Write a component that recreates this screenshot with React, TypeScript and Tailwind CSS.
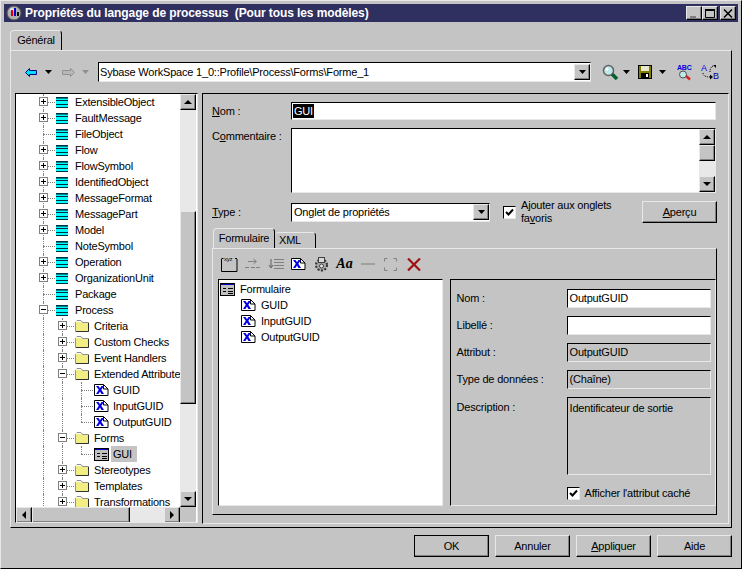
import React from "react";

const raised = "bg-[#c4c4c4] border border-t-[#e8e8e8] border-l-[#e8e8e8] border-r-black border-b-black shadow-[inset_-1px_-1px_0_#808080]";
const sunken = "border border-t-black border-l-black border-r-[#e8e8e8] border-b-[#e8e8e8]";

const Caret = ({ color = "#000" }: { color?: string }) => (
  <svg width="7" height="4" viewBox="0 0 7 4" className="block">
    <path d="M0 0h7L3.5 4z" fill={color} />
  </svg>
);

const TableIcon = () => (
  <svg width="12" height="11" viewBox="0 0 12 11" className="block shrink-0">
    <rect width="12" height="11" fill="#00ffff" />
    <path d="M0 .5h12M0 3.500h12M0 7.500h12M0 10.500h12" stroke="#003040" fill="none" />
    <path d="M0 1.500h12" stroke="#003040" strokeOpacity=".6" />
  </svg>
);

const FolderIcon = () => (
  <svg width="14" height="12" viewBox="0 0 14 12" className="block shrink-0">
    <path d="M.5 2.500 2 .5h4l1.500 2h6v9H.5z" fill="#f2ee84" stroke="#909090" />
    <path d="M1 1.500h5" stroke="#fff" />
    <path d="M13.500 3v8.500H1" stroke="#303030" fill="none" />
  </svg>
);

const AttrIcon = () => (
  <svg width="15" height="12" viewBox="0 0 15 12" className="block shrink-0">
    <path d="M.5.5h9l4.500 4.500v6.500H.5z" fill="#fff" stroke="#000" />
    <path d="M9.500.5v4.500H14" fill="none" stroke="#000" />
    <path d="M2 2h2.500l1.500 2.200L7.500 2H10L7.300 5.800 10 10H7.400L6 7.500 4.400 10H2l2.800-4.200z" fill="#0000e0" />
  </svg>
);

const FormIcon = () => (
  <svg width="15" height="13" viewBox="0 0 15 13" className="block shrink-0">
    <rect x=".5" y=".5" width="14" height="12" fill="#c0c0c0" stroke="#000" />
    <path d="M1 1.500h13" stroke="#0000d0" />
    <path d="M3 5.500h3M3 8.500h3M8 5.500h5M8 8.500h5M8 10.500h5" stroke="#000" />
  </svg>
);

const icons = { table: TableIcon, folder: FolderIcon, attr: AttrIcon, form: FormIcon };

type Row = {
  label: string;
  level: number;
  icon: keyof typeof icons;
  box?: "plus" | "minus";
  end?: boolean;
  selected?: boolean;
};

const treeRows: Row[] = [
  { label: "ExtensibleObject", level: 1, icon: "table", box: "plus" },
  { label: "FaultMessage", level: 1, icon: "table", box: "plus" },
  { label: "FileObject", level: 1, icon: "table" },
  { label: "Flow", level: 1, icon: "table", box: "plus" },
  { label: "FlowSymbol", level: 1, icon: "table", box: "plus" },
  { label: "IdentifiedObject", level: 1, icon: "table", box: "plus" },
  { label: "MessageFormat", level: 1, icon: "table", box: "plus" },
  { label: "MessagePart", level: 1, icon: "table", box: "plus" },
  { label: "Model", level: 1, icon: "table", box: "plus" },
  { label: "NoteSymbol", level: 1, icon: "table" },
  { label: "Operation", level: 1, icon: "table", box: "plus" },
  { label: "OrganizationUnit", level: 1, icon: "table", box: "plus" },
  { label: "Package", level: 1, icon: "table" },
  { label: "Process", level: 1, icon: "table", box: "minus" },
  { label: "Criteria", level: 2, icon: "folder", box: "plus" },
  { label: "Custom Checks", level: 2, icon: "folder", box: "plus" },
  { label: "Event Handlers", level: 2, icon: "folder", box: "plus" },
  { label: "Extended Attributes", level: 2, icon: "folder", box: "minus" },
  { label: "GUID", level: 3, icon: "attr" },
  { label: "InputGUID", level: 3, icon: "attr" },
  { label: "OutputGUID", level: 3, icon: "attr", end: true },
  { label: "Forms", level: 2, icon: "folder", box: "minus" },
  { label: "GUI", level: 3, icon: "form", end: true, selected: true },
  { label: "Stereotypes", level: 2, icon: "folder", box: "plus" },
  { label: "Templates", level: 2, icon: "folder", box: "plus" },
  { label: "Transformations", level: 2, icon: "folder", box: "plus" },
];

const Guide = () => (
  <div className="w-[19px] h-4 shrink-0 flex justify-center">
    <div className="h-4 border-l border-dotted border-[#808080]" />
  </div>
);

const Connector = ({ box, end }: { box?: "plus" | "minus"; end?: boolean }) => (
  <div className="w-[19px] h-4 shrink-0 relative">
    <div className={`absolute left-[9px] top-0 border-l border-dotted border-[#808080] ${end ? "h-2" : "h-4"}`} />
    <div className="absolute left-[9px] top-2 w-[12px] border-t border-dotted border-[#808080]" />
    {box && (
      <svg width="9" height="9" viewBox="0 0 9 9" className="absolute left-[5px] top-[3px]">
        <rect x=".5" y=".5" width="8" height="8" fill="#fff" stroke="#808080" />
        <path d={box === "plus" ? "M2 4.500h5M4.500 2v5" : "M2 4.500h5"} stroke="#000" />
      </svg>
    )}
  </div>
);

const TreeRow = ({ row }: { row: Row }) => {
  const Icon = icons[row.icon];
  return (
    <div className="h-4 flex items-center shrink-0 whitespace-nowrap">
      {Array.from({ length: row.level - 1 }).map((_, i) => (
        <Guide key={i} />
      ))}
      <Connector box={row.box} end={row.end} />
      <div className="ml-[3px] w-[19px] shrink-0 relative z-10">
        <Icon />
      </div>
      <span className={row.selected ? "bg-[#c4c4c4] pl-[2px] pr-[5px] -ml-[2px] leading-4" : "leading-4"}>{row.label}</span>
    </div>
  );
};

const ScrollBtn = ({ dir }: { dir: "up" | "down" | "left" | "right" }) => {
  const d = { up: "M0 5h8L4 1z", down: "M0 1h8L4 5z", left: "M5 0v8L1 4z", right: "M1 0v8l4-4z" }[dir];
  const box = dir === "up" || dir === "down" ? "0 0 8 6" : "0 0 6 8";
  return (
    <div className={`${raised} w-4 h-4 shrink-0 flex items-center justify-center`}>
      <svg width={dir === "up" || dir === "down" ? 8 : 6} height={dir === "up" || dir === "down" ? 6 : 8} viewBox={box} className="block">
        <path d={d} fill="#000" />
      </svg>
    </div>
  );
};

const Tree = () => (
  <div className={`${sunken} w-[183px] h-[430px] shrink-0 flex flex-col bg-white`}>
    <div className="flex h-[413px]">
      <div className="w-[164px] pl-[18px] overflow-hidden flex flex-col">
        {treeRows.map((row) => (
          <TreeRow key={row.label} row={row} />
        ))}
      </div>
      <div className="w-4 shrink-0 flex flex-col bg-[#e8e8e8]">
        <ScrollBtn dir="up" />
        <div className={`${raised} w-4 h-[193px] mt-[101px]`} />
        <div className="flex-1" />
        <ScrollBtn dir="down" />
      </div>
    </div>
    <div className="flex h-[15px] w-[180px] bg-[#e8e8e8] overflow-hidden">
      <ScrollBtn dir="left" />
      <div className={`${raised} w-[98px] h-4`} />
      <div className="flex-1" />
      <ScrollBtn dir="right" />
      <div className="w-4 shrink-0 bg-[#c4c4c4]" />
    </div>
  </div>
);

const U = ({ children }: { children: React.ReactNode }) => <span className="underline">{children}</span>;

const Check = () => (
  <div className={`${sunken} w-[13px] h-[13px] bg-white shrink-0 flex items-center justify-center`}>
    <svg width="9" height="9" viewBox="0 0 9 9" className="block">
      <path d="M1 4l2.500 2.500L8 1.500" stroke="#000" strokeWidth="2" fill="none" />
    </svg>
  </div>
);

const Button = ({ children, strong }: { children: React.ReactNode; strong?: boolean }) => (
  <div className={`${raised} w-[75px] h-[22px] flex items-center justify-center ${strong ? "outline outline-1 -outline-offset-1 outline-black border-black" : ""}`}>
    {children}
  </div>
);

const ComboArrow = () => (
  <div className={`${raised} w-4 h-[16px] flex items-center justify-center shrink-0`}>
    <Caret />
  </div>
);

const Field = ({ label, value, muted }: { label: string; value: string; muted?: boolean }) => (
  <div className="flex items-center h-[19px]">
    <div className="w-[110px] shrink-0">{label}</div>
    <div className={`${sunken} w-[144px] h-[19px] px-[2px] flex items-center ${muted ? "bg-[#c4c4c4]" : "bg-white"}`}>{value}</div>
  </div>
);

const ToolGlyph = ({ children }: { children: React.ReactNode }) => (
  <div className="w-[23px] h-[18px] shrink-0 flex items-center justify-center">{children}</div>
);

const FormToolbar = () => (
  <div className="h-[30px] pl-[5px] pt-[6px] flex items-start">
    <ToolGlyph>
      <svg width="17" height="16" viewBox="0 0 17 16">
        <path d="M.5 3v12.500h15.500V3" fill="none" stroke="#000" />
        <path d="M.5 2.500h2M14 2.500h2" stroke="#000" />
        <text x="3" y="5" fontSize="6" fontFamily="Liberation Sans" fill="#000">xyz</text>
      </svg>
    </ToolGlyph>
    <ToolGlyph>
      <svg width="15" height="12" viewBox="0 0 15 12">
        <path d="M3 3.500h8M8.500 1l3 2.500-3 2.500M0 9.500h4M6 9.500h4M11 9.500h4" fill="none" stroke="#808080" />
      </svg>
    </ToolGlyph>
    <ToolGlyph>
      <svg width="16" height="12" viewBox="0 0 16 12">
        <path d="M3 1v8M1 7l2 3 2-3" fill="none" stroke="#606060" />
        <path d="M6 1.500h10M6 4.500h10M6 7.500h10M6 10.500h10" stroke="#808080" />
      </svg>
    </ToolGlyph>
    <ToolGlyph>
      <AttrIcon />
    </ToolGlyph>
    <ToolGlyph>
      <svg width="17" height="16" viewBox="0 0 17 16">
        <circle cx="8.500" cy="9" r="5.500" fill="#a8a8a8" stroke="#303030" strokeWidth="2" strokeDasharray="2 1.500" />
        <rect x="5.500" y="1.500" width="6" height="5" fill="#d8d8d8" stroke="#404040" />
        <circle cx="8.500" cy="10" r="2" fill="#e8e8e8" stroke="#404040" />
      </svg>
    </ToolGlyph>
    <ToolGlyph>
      <span className="font-['Liberation_Serif'] italic font-bold text-[14px] leading-none tracking-normal">Aa</span>
    </ToolGlyph>
    <ToolGlyph>
      <div className="w-[14px] border-t-2 border-[#a0a0a0]" />
    </ToolGlyph>
    <ToolGlyph>
      <svg width="13" height="13" viewBox="0 0 13 13">
        <path d="M.5 3.500v-3h3M9.500.5h3v3M12.500 9.500v3h-3M3.500 12.500h-3v-3" fill="none" stroke="#808080" />
      </svg>
    </ToolGlyph>
    <ToolGlyph>
      <svg width="14" height="13" viewBox="0 0 14 13">
        <path d="M1 .5l12 12M13 .5l-12 12" stroke="#a01010" strokeWidth="2.200" />
      </svg>
    </ToolGlyph>
  </div>
);

const FormPanel = () => (
  <div className="ml-[9px] w-[505px] h-[267px] border-t border-l border-t-[#e8e8e8] border-l-[#e8e8e8] border-r border-b border-r-black border-b-black">
    <FormToolbar />
    <div className="flex pl-[5px] gap-[7px]">
      <div className={`${sunken} w-[225px] h-[227px] bg-white pl-[1px] pt-px`}>
        <div className="h-4 flex items-center gap-[5px]">
          <FormIcon />
          <span>Formulaire</span>
        </div>
        {["GUID", "InputGUID", "OutputGUID"].map((name) => (
          <div key={name} className="h-4 flex items-center pl-[21px] gap-[5px]">
            <AttrIcon />
            <span>{name}</span>
          </div>
        ))}
      </div>
      <div className={`${sunken} w-[267px] h-[227px] pl-[6px] pt-[9px] flex flex-col gap-2`}>
        <Field label="Nom :" value="OutputGUID" />
        <Field label="Libellé :" value="" />
        <Field label="Attribut :" value="OutputGUID" muted />
        <Field label="Type de données :" value="(Chaîne)" muted />
        <div className="flex">
          <div className="w-[110px] shrink-0 pt-[2px]">Description :</div>
          <div className={`${sunken} w-[144px] h-[78px] px-[2px] pt-[2px]`}>Identificateur de sortie</div>
        </div>
        <div className="flex items-center ml-[110px] mt-[2px] gap-[5px]">
          <Check />
          <span>Afficher l'attribut caché</span>
        </div>
      </div>
    </div>
  </div>
);

const DetailPanel = () => (
  <div className={`${sunken} w-[527px] h-[431px] shrink-0 pt-2`}>
    <div className="flex items-center pl-[9px] h-[18px]">
      <div className="w-[79px] shrink-0">
        <U>N</U>om :
      </div>
      <div className={`${sunken} w-[425px] h-[18px] bg-white px-px flex items-center`}>
        <span className="bg-black text-white px-px leading-[14px]">GUI</span>
      </div>
    </div>
    <div className="flex pl-[9px] mt-2">
      <div className="w-[79px] shrink-0">
        C<U>o</U>mmentaire :
      </div>
      <div className={`${sunken} w-[425px] h-[65px] bg-white flex justify-end`}>
        <div className="w-4 flex flex-col bg-[#e8e8e8] h-[63px]">
          <ScrollBtn dir="up" />
          <div className={`${raised} h-4`} />
          <div className="flex-1" />
          <ScrollBtn dir="down" />
        </div>
      </div>
    </div>
    <div className="flex items-center pl-[9px] mt-2 h-[22px]">
      <div className="w-[79px] shrink-0">
        <U>T</U>ype :
      </div>
      <div className={`${sunken} w-[199px] h-[19px] shrink-0 bg-white flex items-center justify-between pl-[2px]`}>
        <span>Onglet de propriétés</span>
        <ComboArrow />
      </div>
      <div className="ml-[13px] mr-[5px]">
        <Check />
      </div>
      <div className="w-[121px] leading-[13px]">
        Ajouter aux onglets fa<U>v</U>oris
      </div>
      <Button>
        <span>
          <U>A</U>perçu
        </span>
      </Button>
    </div>
    <div className="flex items-end pl-[10px] mt-[5px] h-5">
      <div className="w-[62px] h-5 border-t border-l border-r border-t-[#e8e8e8] border-l-[#e8e8e8] border-r-black flex items-center justify-center rounded-t-sm">
        Formulaire
      </div>
      <div className="w-[41px] h-4 border-t border-r border-t-[#e8e8e8] border-r-black flex items-center pl-[4px] rounded-t-sm">
        XML
      </div>
    </div>
    <FormPanel />
  </div>
);

const TopToolbar = () => (
  <div className="flex items-center h-5 mt-[11px] pl-[14px]">
    <svg width="12" height="9" viewBox="0 0 12 9" className="block shrink-0">
      <path d="M.5 4.500 4.500.5v2h7v4h-7v2z" fill="#00e0ff" stroke="#000080" />
    </svg>
    <div className="ml-[8px]">
      <Caret />
    </div>
    <svg width="13" height="9" viewBox="0 0 13 9" className="block shrink-0 ml-[10px]">
      <path d="M12.500 4.500 8.500.5v2h-8v4h8v2z" fill="#b8b8b8" stroke="#909090" />
    </svg>
    <div className="ml-[7px]">
      <Caret color="#909090" />
    </div>
    <div className={`${sunken} ml-[9px] w-[493px] h-5 bg-white flex items-center justify-between pl-px`}>
      <span className="whitespace-nowrap">Sybase WorkSpace 1_0::Profile\Process\Forms\Forme_1</span>
      <ComboArrow />
    </div>
    <svg width="17" height="17" viewBox="0 0 17 17" className="block shrink-0 ml-[11px]">
      <path d="M10 10l5 5" stroke="#006030" strokeWidth="3.500" />
      <circle cx="6.500" cy="6.500" r="5" fill="#bfe8e8" stroke="#606060" strokeWidth="1.500" />
      <circle cx="5" cy="5" r="1.500" fill="#fff" />
    </svg>
    <div className="ml-[4px]">
      <Caret />
    </div>
    <svg width="14" height="14" viewBox="0 0 14 14" className="block shrink-0 ml-[8px]">
      <rect x=".5" y=".5" width="13" height="13" fill="#808000" stroke="#000" />
      <rect x="3" y="1" width="8" height="5" fill="#e8e8d0" />
      <rect x="3" y="8" width="8" height="5" fill="#000" />
      <rect x="8" y="9" width="2" height="3" fill="#fff" />
    </svg>
    <div className="ml-[7px]">
      <Caret />
    </div>
    <svg width="15" height="17" viewBox="0 0 15 17" className="block shrink-0 ml-[11px]">
      <text x="0" y="6" fontSize="7" fontWeight="700" fontFamily="Liberation Sans" fill="#0000e0">ABC</text>
      <path d="M8 11l5 4.500" stroke="#e02020" strokeWidth="2.500" />
      <circle cx="6" cy="10.500" r="3.500" fill="#bfe8e8" stroke="#505050" />
    </svg>
    <svg width="18" height="16" viewBox="0 0 18 16" className="block shrink-0 ml-[9px]">
      <path d="M2 9c0 3 3 4 7 4" fill="none" stroke="#000" strokeDasharray="1 1" />
      <path d="M9 8c0-3 1-5 3-6" fill="none" stroke="#000" strokeDasharray="1 1" />
      <path d="M12 1h3v3z" fill="#000" />
      <path d="M9 10.500v5l3-2.500z" fill="#000" />
      <text x="0" y="7" fontSize="9" fontFamily="Liberation Sans" fill="#0000e0">A</text>
      <text x="12" y="15" fontSize="9" fontFamily="Liberation Sans" fill="#000090">B</text>
    </svg>
  </div>
);

const WinBtn = ({ kind, disabled }: { kind: "min" | "max" | "close"; disabled?: boolean }) => (
  <div className={`${raised} w-4 h-[14px] flex items-center justify-center`}>
    <svg width="10" height="9" viewBox="0 0 10 9" className="block">
      {kind === "min" && <path d="M1 8h6" stroke={disabled ? "#808080" : "#000"} strokeWidth="2" />}
      {kind === "max" && <path d="M.5 1.500h9v7h-9z" fill="none" stroke="#000" />}
      {kind === "max" && <path d="M0 1h10" stroke="#000" strokeWidth="2" />}
      {kind === "close" && <path d="M1 .5l8 8M9 .5l-8 8" stroke="#000" strokeWidth="1.500" />}
    </svg>
  </div>
);

export default function App() {
  return (
    <div className="w-[742px] h-[569px] overflow-hidden bg-[#c4c4c4] border border-t-[#e8e8e8] border-l-[#e8e8e8] border-r-black border-b-black p-[3px] flex flex-col text-[11px] tracking-[-0.2px] text-black font-['Liberation_Sans',Arial,sans-serif]">
      <div className="h-[18px] shrink-0 bg-[#303060] flex items-center pl-[2px] pr-[2px] text-white">
        <svg width="16" height="16" viewBox="0 0 16 16" className="block shrink-0">
          <circle cx="8" cy="8" r="7" fill="#b0b0b0" stroke="#505050" />
          <circle cx="6" cy="5" r="2" fill="#e8e8e8" />
          <rect x="5" y="5" width="2" height="6" fill="#e00000" />
          <rect x="8" y="3" width="2" height="8" fill="#0000d0" />
          <rect x="11" y="7" width="2" height="4" fill="#101010" />
        </svg>
        <span className="ml-[3px] font-bold text-[12px] tracking-[-0.1px] whitespace-pre">Propriétés du langage de processus  (Pour tous les modèles)</span>
        <div className="ml-auto flex">
          <WinBtn kind="min" disabled />
          <WinBtn kind="max" />
          <div className="ml-[2px]">
            <WinBtn kind="close" />
          </div>
        </div>
      </div>

      <div className="ml-[6px] mt-2 h-5 shrink-0 w-[52px] border-t border-l border-r border-t-[#e8e8e8] border-l-[#e8e8e8] border-r-black rounded-t-sm flex items-center justify-center">
        Général
      </div>
      <div className="ml-[6px] w-[722px] h-[478px] shrink-0 border border-t-[#e8e8e8] border-l-[#e8e8e8] border-r-black border-b-black">
        <TopToolbar />
        <div className="flex mt-[11px] pl-1 gap-1">
          <Tree />
          <DetailPanel />
        </div>
      </div>

      <div className="flex justify-end gap-[6px] mt-[7px] mr-[6px]">
        <Button strong>OK</Button>
        <Button>Annuler</Button>
        <Button>
          <span>
            <U>A</U>ppliquer
          </span>
        </Button>
        <Button>Aide</Button>
      </div>
    </div>
  );
}
